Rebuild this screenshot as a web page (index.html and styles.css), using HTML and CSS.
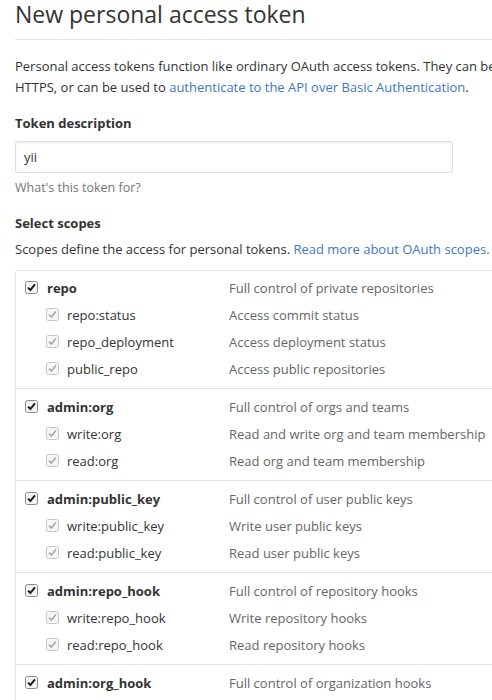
FILE: index.html
```html
<!DOCTYPE html>
<html>
<head>
  <title>New personal access token</title>
  <meta name="viewport" content="width=device-width, initial-scale=1.0">
  <link rel="stylesheet" href="styles.css">
</head>
<body>
  <div class="halaman">
    <div class="subhead">
      <h2 class="subhead-judul">New personal access token</h2>
    </div>

    <p class="intro">Personal access tokens function like ordinary OAuth access tokens. They can be used instead of a password for Git over<br>HTTPS, or can be used to <a href="#">authenticate to the API over Basic Authentication</a>.</p>

    <dl class="form-group">
      <dt><label for="token-desc">Token description</label></dt>
      <dd>
        <input type="text" id="token-desc" class="form-control" value="yii">
        <p class="note">What's this token for?</p>
      </dd>
    </dl>

    <dl class="form-group">
      <dt><label>Select scopes</label></dt>
      <dd>
        <p class="note-scope">Scopes define the access for personal tokens. <a href="#">Read more about OAuth scopes.</a></p>
        <div class="scopes" id="scopes"></div>
      </dd>
    </dl>
  </div>

  <script>
    const grup = [
      {
        nama: "repo", ket: "Full control of private repositories",
        anak: [
          ["repo:status", "Access commit status"],
          ["repo_deployment", "Access deployment status"],
          ["public_repo", "Access public repositories"]
        ]
      },
      {
        nama: "admin:org", ket: "Full control of orgs and teams",
        anak: [
          ["write:org", "Read and write org and team membership"],
          ["read:org", "Read org and team membership"]
        ]
      },
      {
        nama: "admin:public_key", ket: "Full control of user public keys",
        anak: [
          ["write:public_key", "Write user public keys"],
          ["read:public_key", "Read user public keys"]
        ]
      },
      {
        nama: "admin:repo_hook", ket: "Full control of repository hooks",
        anak: [
          ["write:repo_hook", "Write repository hooks"],
          ["read:repo_hook", "Read repository hooks"]
        ]
      },
      {
        nama: "admin:org_hook", ket: "Full control of organization hooks",
        anak: []
      }
    ];

    function kotak(mati) {
      const cls = mati ? "cek cek-mati" : "cek";
      return `
        <svg class="${cls}" width="13" height="13" viewBox="0 0 13 13">
          <rect x="0.5" y="0.5" width="12" height="12" rx="2" class="cek-kotak"/>
          <path d="M3 6.6 L5.4 9 L10 3.4" class="cek-centang"/>
        </svg>`;
    }

    function baris(nama, ket, anak) {
      return `
        <div class="scope-baris ${anak ? "scope-anak" : "scope-induk"}">
          <span class="scope-nama">${kotak(anak)}<span>${nama}</span></span>
          <span class="scope-ket">${ket}</span>
        </div>`;
    }

    const wadah = document.getElementById("scopes");
    grup.forEach(g => {
      let html = baris(g.nama, g.ket, false);
      g.anak.forEach(a => { html += baris(a[0], a[1], true); });
      wadah.innerHTML += `<div class="scope-grup">${html}</div>`;
    });
  </script>
</body>
</html>
```

FILE: styles.css
```css
body {
  margin: 0;
  padding: 0;
  background: #fff;
  font-family: 'Open Sans', 'Noto Sans', sans-serif;
  font-size: 13px;
  line-height: 21px;
  color: #333;
  overflow: hidden;
}
a {
  color: #4078c0;
  text-decoration: none;
}
.halaman {
  width: 760px;
  padding: 0 0 0 15px;
}
.subhead {
  border-bottom: 1px solid #e5e5e5;
  padding-bottom: 11px;
}
.subhead-judul {
  margin: 0;
  font-size: 23px;
  font-weight: normal;
  line-height: 28px;
  color: #333;
}
.intro {
  margin: 16px 0 15px;
  white-space: nowrap;
}
.form-group {
  margin: 15px 0;
}
.form-group dt {
  margin: 0 0 7px;
  font-weight: bold;
}
.form-group dd {
  margin: 0;
}
.form-control {
  box-sizing: border-box;
  width: 438px;
  height: 32px;
  padding: 6px 8px;
  font-family: inherit;
  font-size: 13px;
  color: #333;
  border: 1px solid #ddd;
  border-radius: 3px;
  box-shadow: inset 0 1px 2px rgba(0, 0, 0, 0.075);
  outline: none;
}
.note {
  margin: 4px 0 0;
  font-size: 12.5px;
  color: #767676;
}
.note-scope {
  margin: -2px 0 10px;
}
.scopes {
  border: 1px solid #e5e5e5;
  border-radius: 3px;
}
.scope-grup {
  padding: 5px 0;
  border-top: 1px solid #e5e5e5;
}
.scope-grup:first-child {
  border-top: none;
  padding-top: 4px;
}
.scope-baris {
  display: flex;
  align-items: center;
  height: 27px;
}
.scope-nama {
  display: flex;
  align-items: center;
  gap: 9px;
  width: 213px;
  box-sizing: border-box;
  padding-left: 9px;
}
.scope-induk .scope-nama {
  font-weight: bold;
}
.scope-anak .scope-nama {
  padding-left: 30px;
  gap: 8px;
}
.scope-ket {
  color: #666;
}
.cek {
  flex: none;
  margin-top: -3px;
}
.cek-kotak {
  fill: #f4f4f4;
  stroke: #8a8a8a;
}
.cek-centang {
  fill: none;
  stroke: #1e1e1e;
  stroke-width: 2;
}
.cek-mati .cek-kotak {
  fill: #f6f6f6;
  stroke: #c6c6c6;
}
.cek-mati .cek-centang {
  stroke: #a8a8a8;
  stroke-width: 1.6;
}
```
